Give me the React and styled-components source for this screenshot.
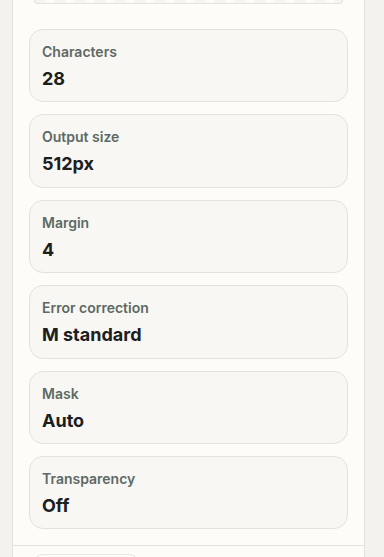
import React from 'react';
import styled, { createGlobalStyle } from 'styled-components';

const GlobalStyle = createGlobalStyle`
  html, body {
    margin: 0;
    padding: 0;
    background: #f3f2ee;
    font-family: Inter, 'Noto Sans', sans-serif;
    -webkit-font-smoothing: antialiased;
  }
`;

const Panel = styled.div`
  margin-left: 12px;
  width: 351px;
  height: 557px;
  overflow: hidden;
  background: #fdfcf8;
  border-left: 1px solid #e4e2db;
  border-right: 1px solid #e4e2db;
  display: flex;
  flex-direction: column;
`;

const Body = styled.div`
  display: flex;
  flex-direction: column;
  gap: 12px;
  padding: 0 16px 16px;
`;

const PreviewEdge = styled.div`
  height: 3px;
  margin: 0 5px 13px;
  border: 1px solid #e4e2db;
  border-top: none;
  border-radius: 0 0 14px 14px;
  background-color: #fcfbf7;
  background-image: linear-gradient(90deg, #f5f4f0 50%, transparent 50%);
  background-size: 20px 100%;
`;

const Card = styled.div`
  box-sizing: border-box;
  height: 73.4px;
  padding: 13px 12px 0;
  background: #f8f7f3;
  border: 1px solid #e4e2db;
  border-radius: 14px;
  display: flex;
  flex-direction: column;
  gap: 8px;
`;

const Label = styled.div`
  font-size: 14px;
  line-height: 17px;
  font-weight: 600;
  color: #5d6964;
`;

const Value = styled.div`
  font-size: 18px;
  line-height: 22px;
  font-weight: 700;
  color: #1b201e;
`;

const Footer = styled.div`
  border-top: 1px solid #e4e2db;
  padding: 8px 16px 0;
  flex: 1;
`;

const FooterButton = styled.div`
  width: 104px;
  height: 30px;
  margin-left: 4px;
  border: 1px solid #e8e6df;
  border-radius: 10px;
  background: #fdfcf8;
`;

const stats = [
  { label: 'Characters', value: '28' },
  { label: 'Output size', value: '512px' },
  { label: 'Margin', value: '4' },
  { label: 'Error correction', value: 'M standard' },
  { label: 'Mask', value: 'Auto' },
  { label: 'Transparency', value: 'Off' },
];

const App = () => {
  return (
    <>
      <GlobalStyle />
      <Panel>
        <Body>
          <PreviewEdge />
          {stats.map((s) => (
            <Card key={s.label}>
              <Label>{s.label}</Label>
              <Value>{s.value}</Value>
            </Card>
          ))}
        </Body>
        <Footer>
          <FooterButton />
        </Footer>
      </Panel>
    </>
  );
};

export default App;
